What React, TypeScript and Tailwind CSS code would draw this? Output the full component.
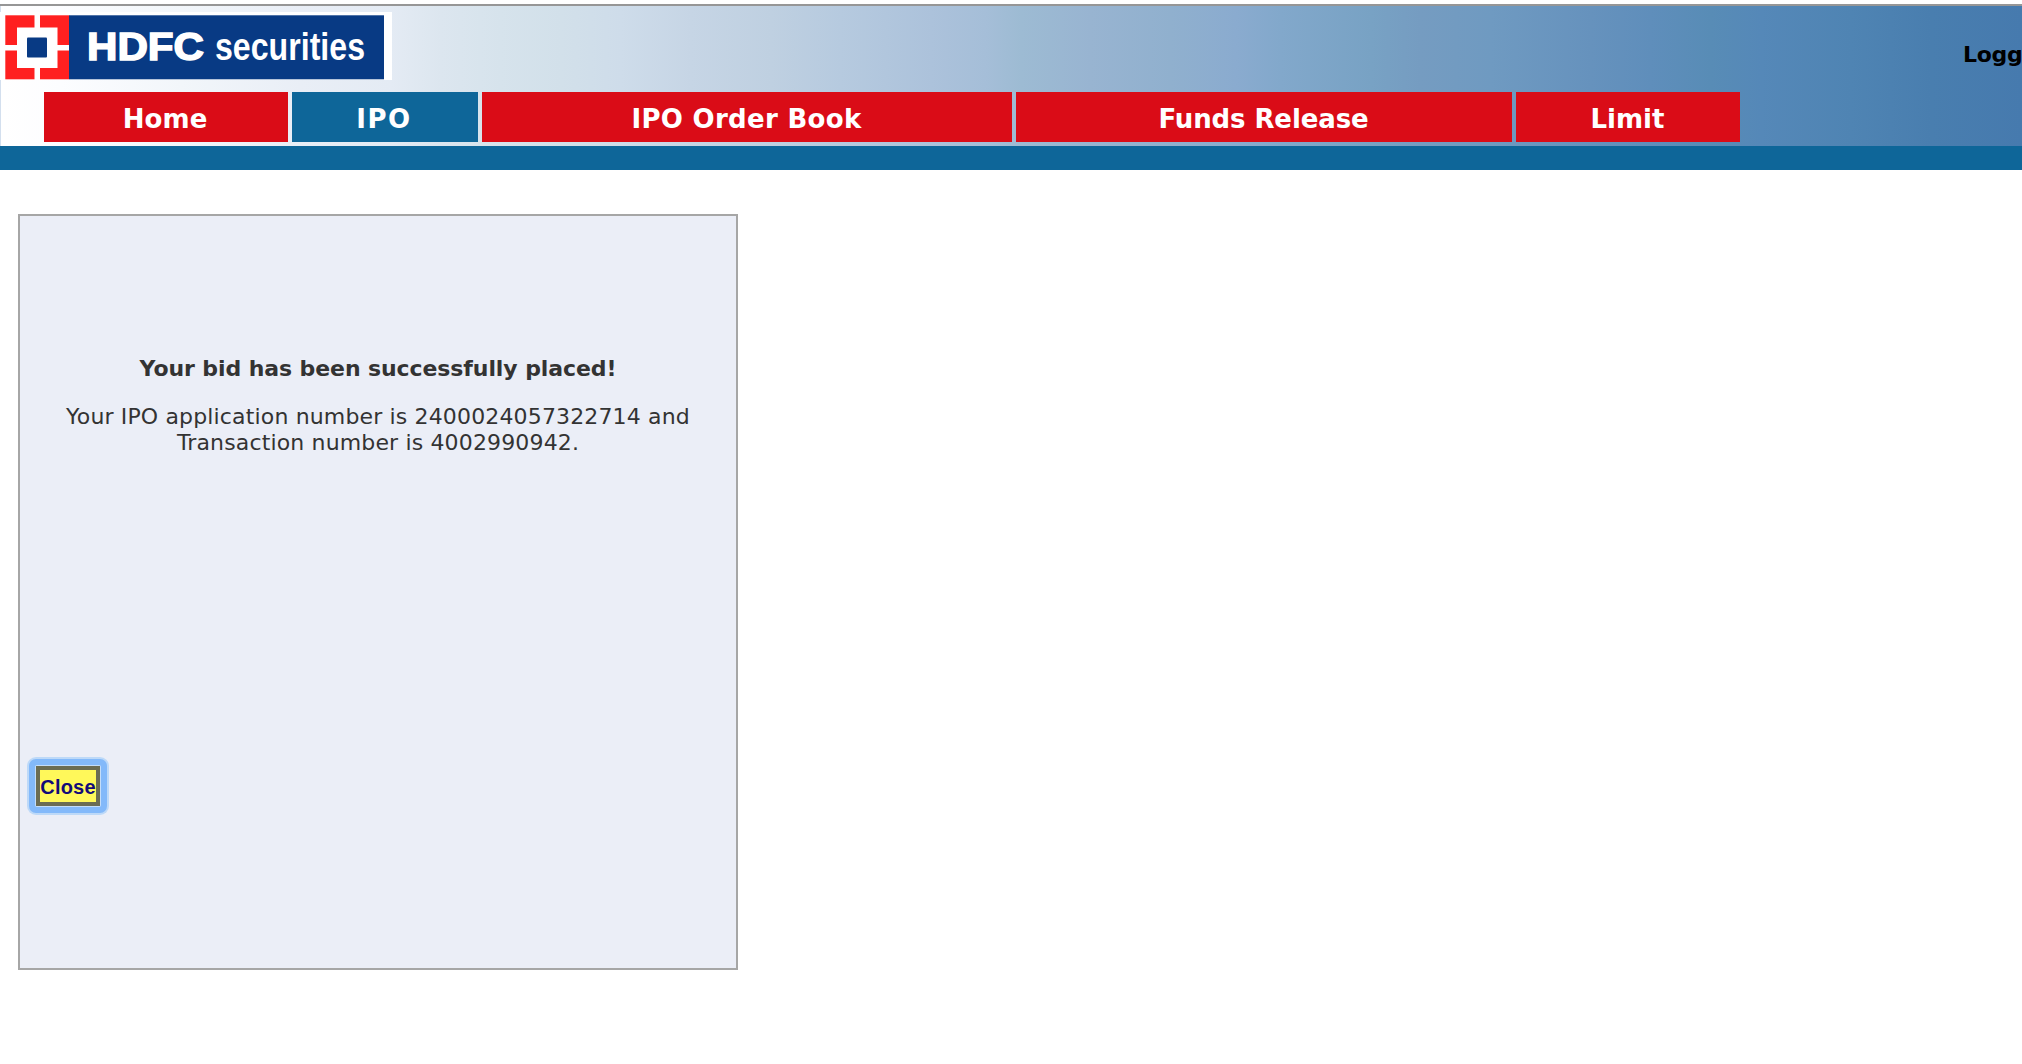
import React from "react";

const headerGradient =
  "bg-[linear-gradient(to_right,#ffffff_0px,#fcfdff_60px,#f2f6fa_180px,#e9eef6_300px,#e4ebf4_390px,#dce6ef_440px,#d6e3ec_500px,#d2e0ea_560px,#cedcea_620px,#c6d5e5_690px,#bfd0e1_770px,#b6cadf_840px,#acc2db_930px,#a5bed8_985px,#9dbbd3_1020px,#98b4d1_1090px,#90b0ce_1170px,#8aabcf_1235px,#82a8cb_1280px,#78a2c4_1370px,#759cc1_1420px,#6f9ac1_1490px,#6692bd_1590px,#5f8ebb_1650px,#588cb6_1710px,#5588b8_1760px,#4f84b3_1850px,#497eaf_1930px,#467aae_2022px)]";

const tabs = [
  { label: "Home", box: "w-[244px] bg-[#da0c17] tracking-[0.1px] pr-[2px]" },
  { label: "IPO", box: "w-[186px] bg-[#0e6699] tracking-[1.6px] pr-[2px]" },
  { label: "IPO Order Book", box: "w-[530px] bg-[#da0c17] tracking-[0.3px] pr-[1px]" },
  { label: "Funds Release", box: "w-[496px] bg-[#da0c17] tracking-[-0.1px] pr-[1px]" },
  { label: "Limit", box: "w-[224px] bg-[#da0c17] pr-[1px]" },
];

function Logo() {
  return (
    <svg width="392" height="68" viewBox="0 12 392 68" className="block shrink-0 overflow-visible">
      <rect x="0" y="12" width="392" height="68" fill="#fff" />
      <rect x="5.3" y="15.3" width="64" height="64" fill="#ff2020" />
      <rect x="69" y="15.3" width="315" height="64" fill="#083a84" />
      <rect x="17" y="27.5" width="40.5" height="40.5" fill="#fff" />
      <rect x="34.5" y="15" width="5.5" height="65" fill="#fff" />
      <rect x="5" y="45" width="64" height="5.5" fill="#fff" />
      <rect x="27" y="37.5" width="20" height="20" rx="1" fill="#083a84" />
      <text x="87" y="60" textLength="117" lengthAdjust="spacingAndGlyphs" fill="#fff" stroke="#fff" strokeWidth="1.5" fontFamily="'Liberation Sans', sans-serif" fontWeight="700" fontSize="38">
        HDFC
      </text>
      <text x="215" y="60" textLength="150" lengthAdjust="spacingAndGlyphs" fill="#fff" fontFamily="'Liberation Sans', sans-serif" fontWeight="700" fontSize="38.5">
        securities
      </text>
    </svg>
  );
}

export default function App() {
  return (
    <div className="h-[1064px] w-full overflow-hidden bg-white pt-1 font-['DejaVu_Sans',Verdana,sans-serif]">
      <header className="border-t-2 border-[#969696]">
        <div className={`h-[140px] border-l border-[#d3dfee] ${headerGradient}`}>
          <div className="-ml-px flex h-[86px] justify-between pt-1.5">
            <Logo />
            <div className="w-[59px] pt-[29px] text-[22px] leading-[28px] font-bold tracking-[-0.3px] whitespace-nowrap text-black">
              Logg
            </div>
          </div>
          <nav className="flex gap-1 pl-[43px]">
            {tabs.map((t) => (
              <a
                key={t.label}
                className={`flex h-[50px] items-center justify-center pt-1 text-[26px] leading-none font-bold text-white ${t.box}`}
              >
                {t.label}
              </a>
            ))}
          </nav>
        </div>
        <div className="h-6 bg-[#0e6699]" />
      </header>

      <main className="mt-11 ml-[18px] flex h-[756px] w-[720px] flex-col border-2 border-[#a6a6a6] bg-[#ebeef7] text-center text-[22px] leading-[26px] text-[#333]">
        <p className="pt-[140px] font-bold tracking-[-0.09px]">Your bid has been successfully placed!</p>
        <p className="mt-[22px] tracking-[0.15px]">
          Your IPO application number is 2400024057322714 and
          <br />
          Transaction number is 4002990942.
        </p>
        <div className="mt-[301px] ml-[7px] self-start rounded-[9px] bg-[#bdd9f8] p-[2px]">
          <div className="rounded-[7px] bg-[#83b9fa] p-[6px]">
            <div className="rounded-[2px] bg-[#c4ddf9] p-px">
              <button className="flex h-10 w-16 items-center justify-center border-4 border-[#6b6c53] bg-[#fff85a] pt-px font-['Liberation_Sans',Arial,sans-serif] text-[20px] leading-none font-bold tracking-[0.2px] text-[#130b78]">
                Close
              </button>
            </div>
          </div>
        </div>
      </main>
    </div>
  );
}
